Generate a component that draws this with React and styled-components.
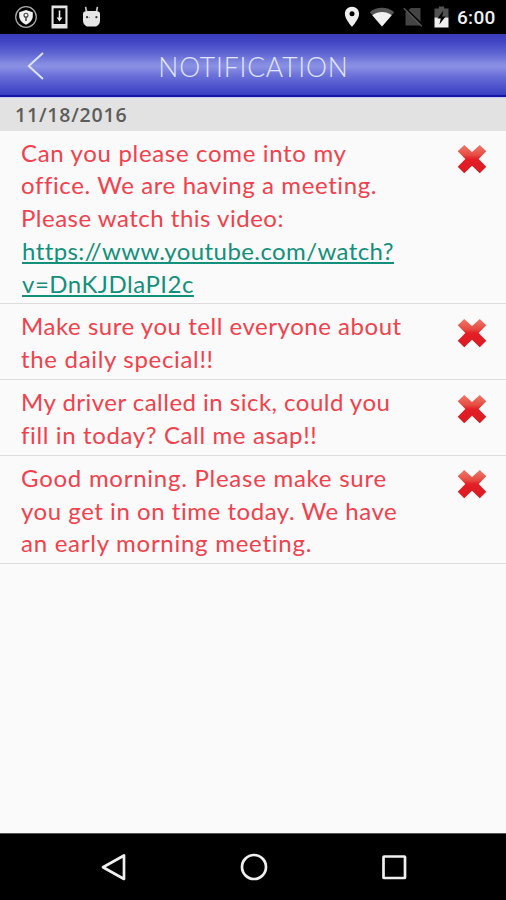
import React from 'react';
import styled, { createGlobalStyle } from 'styled-components';

const textColor = '#f2404c';
const linkColor = '#12907c';
const lineColor = '#dcdcdc';

const GlobalStyle = createGlobalStyle`
    body {
        margin: 0;
        background: #fafafa;
    }
`;

const Screen = styled.div`
    display: flex;
    flex-direction: column;
    width: 506px;
    height: 900px;
    overflow: hidden;
    background: #fafafa;
    font-family: Lato, 'Open Sans', sans-serif;
`;

const StatusBar = styled.div`
    display: flex;
    justify-content: space-between;
    flex: none;
    height: 34px;
    background: #000;
`;

const StatusGroup = styled.div`
    display: flex;
    align-items: center;
    gap: ${({ $gap }) => $gap}px;
    padding: ${({ $right }) => ($right ? '0 10px 0 0' : '0 0 0 14px')};

    & > svg {
        display: block;
        flex: none;
    }
`;

const Clock = styled.span`
    width: 39px;
    margin-top: 2px;
    font: 500 19px/22px Roboto, sans-serif;
    letter-spacing: 0.3px;
    color: #f0f0f0;
`;

const Header = styled.header`
    display: grid;
    grid-template-columns: 72px 1fr 72px;
    align-items: center;
    flex: none;
    box-sizing: border-box;
    height: 64px;
    border-bottom: 1px solid #c9c6f2;
    background: linear-gradient(#3a3dba 0%, #4145c4 12%, #5d63d2 30%, #8289e0 46%, #8a90e4 52%, #6b71d8 66%, #4a4fcb 86%, #3a3fc2 96%, #1515a6 97%, #1515a6 100%);
`;

const BackButton = styled.button`
    display: flex;
    padding: 0 0 0 26px;
    border: 0;
    background: none;
`;

const Title = styled.h1`
    margin: 2px 0 0 1px;
    font-size: 26.5px;
    font-weight: 300;
    line-height: 32px;
    letter-spacing: 0.8px;
    text-align: center;
    color: #e2e6ff;
`;

const DateBar = styled.div`
    flex: none;
    box-sizing: border-box;
    height: 32.5px;
    padding: 2px 0 0 15px;
    background: #e2e2e2;
    font: 600 19.5px/30px 'Open Sans', sans-serif;
    letter-spacing: 0.8px;
    color: #5c5c5c;
`;

const Messages = styled.main`
    flex: 1;
`;

const Message = styled.article`
    display: flex;
    justify-content: space-between;
    align-items: flex-start;
    padding: 6px 19.5px 3.2px 21px;
    border-bottom: 1px solid ${lineColor};
`;

const Line = styled.span`
    display: block;
    width: max-content;
    font-size: 24px;
    line-height: 32.75px;
    letter-spacing: ${({ $spacing }) => $spacing}px;
    font-variant-ligatures: none;
    white-space: nowrap;
    color: ${textColor};
`;

const LinkLine = styled(Line)`
    margin-left: 1px;
    color: ${linkColor};
    text-decoration: underline;
    text-decoration-thickness: 1.5px;
    text-underline-offset: 1.5px;
    text-decoration-skip-ink: none;
`;

const DeleteButton = styled.button`
    display: flex;
    margin-top: 7.5px;
    padding: 0;
    border: 0;
    background: none;
`;

const NavBar = styled.nav`
    display: flex;
    justify-content: space-between;
    align-items: center;
    flex: none;
    box-sizing: border-box;
    height: 67px;
    padding: 0 98px 0 99px;
    border-top: 1px solid #555;
    background: #000;
`;

const messages = [
    [
        { text: 'Can you please come into my', spacing: 0.67 },
        { text: 'office. We are having a meeting.', spacing: 0.6 },
        { text: 'Please watch this video:', spacing: 0.5 },
        { text: 'https://www.youtube.com/watch?', spacing: 0.41, link: true },
        { text: 'v=DnKJDlaPI2c', spacing: 0.5, link: true },
    ],
    [
        { text: 'Make sure you tell everyone about', spacing: 0.54 },
        { text: 'the daily special!!', spacing: 0.68 },
    ],
    [
        { text: 'My driver called in sick, could you', spacing: 0.48 },
        { text: 'fill in today? Call me asap!!', spacing: 0.63 },
    ],
    [
        { text: 'Good morning. Please make sure', spacing: 0.74 },
        { text: 'you get in on time today. We have', spacing: 0.54 },
        { text: 'an early morning meeting.', spacing: 0.74 },
    ],
];

function ShieldIcon() {
    return (
        <svg width="24" height="24" viewBox="0 0 24 24" fill="none">
            <circle cx="12" cy="12" r="10.3" stroke="#a8a8a8" strokeWidth="1.3" />
            <path d="M12 5 L18.8 7.2 V11 C18.8 15 15.8 18.2 12 19.8 C8.2 18.2 5.2 15 5.2 11 V7.2 Z" fill="#f0f0f0" />
            <circle cx="12" cy="10.2" r="2" stroke="#444" strokeWidth="1.1" />
            <path d="M12 11.5 V16" stroke="#444" strokeWidth="1.5" />
        </svg>
    );
}

function DownloadIcon() {
    return (
        <svg width="17" height="24" viewBox="0 0 17 24" fill="none">
            <path d="M0.5 0.5 H16.5 V23.5 H0.5 Z M2.6 3.2 V19 H14.4 V3.2 Z" fill="#e4e4e4" fillRule="evenodd" />
            <path d="M8.5 5.5 V14.5" stroke="#eee" strokeWidth="1.6" />
            <path d="M5.6 12.6 H11.4 L8.5 16.4 Z" fill="#eee" />
        </svg>
    );
}

function AndroidIcon() {
    return (
        <svg width="21" height="22" viewBox="-1 0 21 22">
            <path d="M3.6 0.8 L4.6 6 M15.4 0.8 L14.4 6" stroke="#c4c4c4" strokeWidth="1.7" />
            <path d="M1 7.4 C1 6 3 5 5 5 H14 C16 5 18 6 18 7.4 V14.5 C18 18 15.5 20.6 12.5 20.6 H6.5 C3.5 20.6 1 18 1 14.5 Z" fill="#e6e6e6" />
            <circle cx="5" cy="11.2" r="1.1" fill="#333" />
            <circle cx="14.4" cy="11.2" r="1.1" fill="#333" />
            <path d="M6.5 11.4 H8" stroke="#999" />
        </svg>
    );
}

function PinIcon() {
    return (
        <svg width="16" height="22" viewBox="0 0 16 22">
            <path d="M8 0.8 C3.9 0.8 0.9 3.9 0.9 7.9 C0.9 13 8 20.8 8 20.8 C8 20.8 15.1 13 15.1 7.9 C15.1 3.9 12.1 0.8 8 0.8 Z M8 5.3 A2.5 2.5 0 1 1 8 10.3 A2.5 2.5 0 1 1 8 5.3 Z" fill="#f0f0f0" fillRule="evenodd" />
        </svg>
    );
}

function WifiIcon() {
    return (
        <svg width="26" height="20" viewBox="0 0 26 20">
            <path d="M0.8 5.2 C7.5 -0.6 18.5 -0.6 25.2 5.2 L13 19.6 Z" fill="#555" />
            <path d="M3.3 8.2 C9.3 3.8 16.7 3.8 22.7 8.2 L13 19.6 Z" fill="#f0f0f0" />
        </svg>
    );
}

function NoSimIcon() {
    return (
        <svg width="22" height="20" viewBox="0 0 22 20">
            <path d="M7.8 1 H17.5 V18.5 H2.5 V5.4 Z" fill="#444" />
            <path d="M1.6 0.3 L20 18.4" stroke="#000" strokeWidth="1.6" />
            <path d="M0.8 1.2 L18.8 19.2" stroke="#555" strokeWidth="1.5" />
        </svg>
    );
}

function BatteryIcon() {
    return (
        <svg width="15" height="22" viewBox="0 0 15 22">
            <path d="M4.8 0.5 H10.2 V2.5 H14.5 V11.5 H0.5 V2.5 H4.8 Z" fill="#525252" />
            <path d="M0.5 11.5 H14.5 V21.5 H0.5 Z" fill="#f0f0f0" />
            <path d="M9.5 4.5 L3.4 12.6 H6.8 L5.4 18.5 L11.6 10.4 H8.2 Z" fill="#050505" />
        </svg>
    );
}

function BackIcon() {
    return (
        <svg width="20" height="30" viewBox="0 0 20 30" fill="none">
            <path d="M17 2 L2.8 15 L17 28" stroke="#dce2ff" strokeWidth="2" />
        </svg>
    );
}

function DeleteIcon() {
    return (
        <svg width="30" height="30" viewBox="0 0 29 29">
            <defs>
                <linearGradient id="cross" x1="0" y1="0" x2="0" y2="1">
                    <stop offset="0" stopColor="#ee7a6c" />
                    <stop offset="0.36" stopColor="#e74c42" />
                    <stop offset="0.5" stopColor="#e41e24" />
                    <stop offset="1" stopColor="#d91b24" />
                </linearGradient>
            </defs>
            <path d="M7 0.9 L14.5 7.7 L22 0.9 L28.3 7 L20.9 14.4 L28.3 21.9 L22 28.2 L14.5 21 L7 28.2 L0.7 21.9 L8.1 14.4 L0.7 7 Z" fill="url(#cross)" />
        </svg>
    );
}

export default function App() {
    return (
        <Screen>
            <GlobalStyle />
            <StatusBar>
                <StatusGroup $gap={13}>
                    <ShieldIcon />
                    <DownloadIcon />
                    <AndroidIcon />
                </StatusGroup>
                <StatusGroup $right $gap={8.5}>
                    <PinIcon />
                    <WifiIcon />
                    <NoSimIcon />
                    <BatteryIcon />
                    <Clock>6:00</Clock>
                </StatusGroup>
            </StatusBar>
            <Header>
                <BackButton aria-label="Back">
                    <BackIcon />
                </BackButton>
                <Title>NOTIFICATION</Title>
            </Header>
            <DateBar>11/18/2016</DateBar>
            <Messages>
                {messages.map((lines, i) => (
                    <Message key={i}>
                        <div>
                            {lines.map(({ text, spacing, link }) => (
                                link
                                    ? <LinkLine key={text} $spacing={spacing}>{text}</LinkLine>
                                    : <Line key={text} $spacing={spacing}>{text}</Line>
                            ))}
                        </div>
                        <DeleteButton aria-label="Delete">
                            <DeleteIcon />
                        </DeleteButton>
                    </Message>
                ))}
            </Messages>
            <NavBar>
                <svg width="28" height="30" viewBox="0 0 28 30" fill="none">
                    <path d="M25 3.5 V27 L4 15.2 Z" stroke="#f0f0f0" strokeWidth="2.7" strokeLinejoin="round" />
                </svg>
                <svg width="28" height="28" viewBox="0 0 28 28" fill="none">
                    <circle cx="14" cy="14" r="12" stroke="#f0f0f0" strokeWidth="2.7" />
                </svg>
                <svg width="28" height="28" viewBox="0 0 28 28" fill="none">
                    <rect x="3.5" y="3.5" width="21.5" height="21.5" rx="0.6" stroke="#f0f0f0" strokeWidth="2.7" />
                </svg>
            </NavBar>
        </Screen>
    );
}
